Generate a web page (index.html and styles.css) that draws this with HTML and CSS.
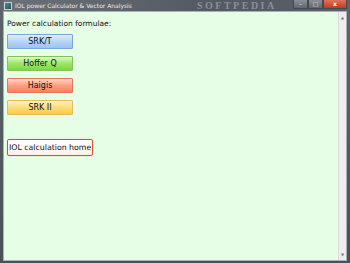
FILE: index.html
```html
<!DOCTYPE html>
<html>
<head>
  <title>IOL power Calculator &amp; Vector Analysis</title>
  <link rel="stylesheet" href="styles.css">
</head>
<body>
  <div class="window">
    <div class="titleBar">
      <div class="appIcon"></div>
      <div class="titleText">IOL power Calculator &amp; Vector Analysis</div>
      <div class="watermark">SOFTPEDIA</div>
      <div class="controls">
        <div class="ctrl">&#8211;</div>
        <div class="ctrl">&#9633;</div>
        <div class="ctrl close">x</div>
      </div>
    </div>
    <div class="client">
      <div class="content">
        <div class="heading">Power calculation formulae:</div>
        <button class="formulaButton" id="srkt">SRK/T</button>
        <button class="formulaButton" id="hoffer">Hoffer Q</button>
        <button class="formulaButton" id="haigis">Haigis</button>
        <button class="formulaButton" id="srk2">SRK II</button>
        <button id="homeButton">IOL calculation home</button>
      </div>
      <div class="scrollBar">
        <div class="arrow">&#9650;</div>
        <div class="arrow">&#9660;</div>
      </div>
    </div>
  </div>
</body>
</html>
```
FILE: styles.css
```css
body {
  margin: 0;
  width: 350px;
  height: 263px;
  overflow: hidden;
  font-family: "DejaVu Sans", sans-serif;
}

.window {
  display: flex;
  flex-direction: column;
  height: 263px;
  background: linear-gradient(#5d646b, #4a5157);
  padding: 0 3px 2px 3px;
  box-sizing: border-box;
}

.titleBar {
  height: 11px;
  display: flex;
  align-items: center;
  color: #e8e8e8;
  font-size: 6px;
  background: linear-gradient(90deg, #6b7178, #545a61 60%, #5a6068);
}

.appIcon {
  width: 6px;
  height: 6px;
  margin: 0 3px 0 1px;
  background: linear-gradient(135deg, #3a8ac8, #2a5a3a);
  border: 1px solid #ccc;
}

.titleText {
  width: 182px;
  white-space: nowrap;
}

.watermark {
  color: #8a9096;
  font-family: "Liberation Serif", serif;
  font-size: 10px;
  font-weight: bold;
  letter-spacing: 2.5px;
  flex: 1;
  line-height: 11px;
  white-space: nowrap;
}

.controls {
  display: flex;
  height: 9px;
  align-self: flex-start;
}

.ctrl {
  width: 13px;
  height: 8px;
  line-height: 8px;
  text-align: center;
  font-size: 6px;
  background: linear-gradient(#8a9097, #60666d);
  border: 1px solid #444a50;
  border-top: none;
}

.close {
  width: 22px;
  background: linear-gradient(#e0735c, #c23a22);
  color: white;
  font-weight: bold;
}

.client {
  flex: 1;
  display: flex;
  border: 1px solid #aab0b6;
}

.content {
  flex: 1;
  background-color: #e6fde6;
  display: flex;
  flex-direction: column;
  align-items: flex-start;
  padding: 7px 0 0 3px;
}

.heading {
  font-size: 7.5px;
  color: #111;
  margin-bottom: 6px;
}

.formulaButton {
  width: 66px;
  height: 15px;
  margin: 0 0 7px 0;
  padding: 0;
  font-family: "DejaVu Sans", sans-serif;
  font-size: 8px;
  color: #111;
  border-radius: 1px;
  cursor: pointer;
}

#srkt {
  background: linear-gradient(#e2eefc, #b4d4f8 50%, #9cc4f2);
  border: 1px solid #7aa6dc;
}

#hoffer {
  background: linear-gradient(#d8fbc0, #9ce866 50%, #7ed644);
  border: 1px solid #86c05a;
}

#haigis {
  background: linear-gradient(#ffd6c8, #ff9f82 50%, #f6805e);
  border: 1px solid #e07858;
}

#srk2 {
  background: linear-gradient(#fff2c8, #ffdc78 50%, #ffcc44);
  border: 1px solid #e6bc54;
}

#homeButton {
  margin-top: 17px;
  height: 17px;
  padding: 0 1px;
  font-family: "DejaVu Sans", sans-serif;
  font-size: 7.8px;
  color: #111;
  background: linear-gradient(#ffffff, #fdf2ec);
  border: 1px solid #d8502c;
  border-radius: 2px;
  box-shadow: 0 0 1px #f09070;
  cursor: pointer;
}

.scrollBar {
  width: 7px;
  background-color: #eeeeee;
  border-left: 1px solid #dcdcdc;
  display: flex;
  flex-direction: column;
  justify-content: space-between;
}

.arrow {
  font-size: 4px;
  color: #777;
  text-align: center;
  padding: 3px 0;
}
```
